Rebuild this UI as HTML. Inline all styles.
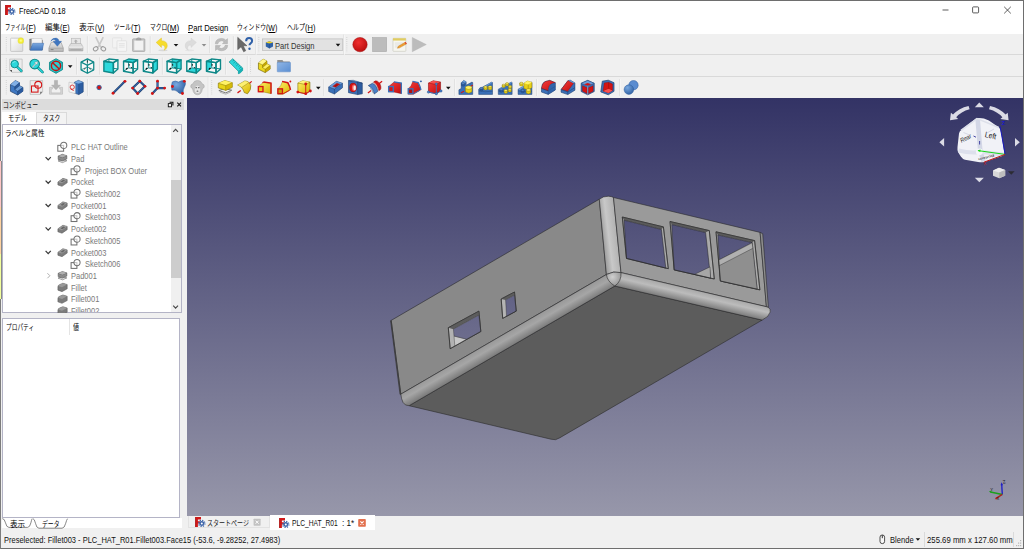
<!DOCTYPE html>
<html lang="ja"><head><meta charset="utf-8"><title>FreeCAD 0.18</title><style>
html,body{margin:0;padding:0;}
body{width:1024px;height:549px;overflow:hidden;position:relative;background:#f0f0f0;font-family:"Liberation Sans", "Noto Sans CJK JP", sans-serif;}
div,span.t,svg{position:absolute;}
span.t{white-space:nowrap;line-height:12px;height:12px;transform-origin:0 50%;}
u{text-decoration-thickness:0.6px;text-underline-offset:1px;}
</style></head>
<body>
<div style="left:0px;top:0px;width:1024px;height:1px;background:#6e6e6e;"></div><div style="left:1023px;top:0px;width:1px;height:549px;background:#6e6e6e;"></div><div style="left:0px;top:548px;width:1024px;height:1px;background:#6e6e6e;"></div><div style="left:0px;top:0px;width:1px;height:549px;background:#7c7c7c;"></div><div style="left:1px;top:1px;width:1022px;height:33.6px;background:#fff;"></div><span id="t0" class="t" style="left:18.8px;top:5.20px;font-size:8.6px;color:#000;transform:scaleX(0.8482);">FreeCAD 0.18</span><svg style="left:5.2px;top:5px;width:10.6px;height:10.0px" viewBox="0 0 10.6 10"><path d="M0.3 0.100h5.700v2.500h-3.100v1.700h2v2.100h-2v3.500h-2.600z" fill="#cf1818"/><path d="M0.300 0.100h.7v9.800h-.7z" fill="#a81212"/><circle cx="6.800" cy="6.400" r="2.500" fill="#3c64a8"/><circle cx="6.800" cy="6.400" r="3.100" fill="none" stroke="#3c64a8" stroke-width="1.300" stroke-dasharray="1.200 1.230"/><circle cx="6.800" cy="6.400" r="1" fill="#fff"/></svg><svg style="left:930px;top:0;width:93px;height:20px" viewBox="0 0 93 20"><path d="M12.5 10h6" stroke="#333" stroke-width="0.8" fill="none"/><rect x="42.6" y="6.9" width="6" height="6" rx="0.8" stroke="#333" stroke-width="0.8" fill="none"/><path d="M74.2 6.8l6.6 6.6M80.8 6.8l-6.6 6.6" stroke="#333" stroke-width="0.8" fill="none"/></svg><span id="t1" class="t" style="left:5px;top:21.90px;font-size:8px;color:#000;transform:scaleX(0.6500);">ファイル</span><span id="t2" class="t" style="left:26.1px;top:22.00px;font-size:8.6px;color:#000;transform:scaleX(0.9000);">(<u>F</u>)</span><span id="t3" class="t" style="left:45.3px;top:21.90px;font-size:8px;color:#000;transform:scaleX(0.9313);">編集</span><span id="t4" class="t" style="left:60.4px;top:22.00px;font-size:8.6px;color:#000;transform:scaleX(0.8359);">(<u>E</u>)</span><span id="t5" class="t" style="left:79.4px;top:21.90px;font-size:8px;color:#000;transform:scaleX(0.9750);">表示</span><span id="t6" class="t" style="left:95.2px;top:22.00px;font-size:8.6px;color:#000;transform:scaleX(0.8272);">(<u>V</u>)</span><span id="t7" class="t" style="left:113.8px;top:21.90px;font-size:8px;color:#000;transform:scaleX(0.6958);">ツール</span><span id="t8" class="t" style="left:130.8px;top:22.00px;font-size:8.6px;color:#000;transform:scaleX(0.8636);">(<u>T</u>)</span><span id="t9" class="t" style="left:149.6px;top:21.90px;font-size:8px;color:#000;transform:scaleX(0.7208);">マクロ</span><span id="t10" class="t" style="left:167.1px;top:22.00px;font-size:8.6px;color:#000;transform:scaleX(0.9441);">(<u>M</u>)</span><span id="t11" class="t" style="left:236.8px;top:21.90px;font-size:8px;color:#000;transform:scaleX(0.7250);">ウィンドウ</span><span id="t12" class="t" style="left:266px;top:22.00px;font-size:8.6px;color:#000;transform:scaleX(0.8144);">(<u>W</u>)</span><span id="t13" class="t" style="left:286.6px;top:21.90px;font-size:8px;color:#000;transform:scaleX(0.7542);">ヘルプ</span><span id="t14" class="t" style="left:304.9px;top:22.00px;font-size:8.6px;color:#000;transform:scaleX(0.8689);">(<u>H</u>)</span><span id="t15" class="t" style="left:187.9px;top:22.00px;font-size:8.6px;color:#000;transform:scaleX(0.8952);"><u>P</u>art Design</span><div style="left:1px;top:34px;width:1022px;height:64px;background:#f0f0f0;"></div><div style="left:1px;top:54.4px;width:1022px;height:1px;background:#d9d9d9;"></div><div style="left:1px;top:76px;width:1022px;height:1px;background:#d9d9d9;"></div><svg style="left:0;top:34px;width:1024px;height:64px" viewBox="0 34 1024 64"><defs><linearGradient id="gPage" x1="0" y1="0" x2="1" y2="1"><stop offset="0" stop-color="#fdfdfd"/><stop offset="1" stop-color="#dcdcdc"/></linearGradient><linearGradient id="gBlue" x1="0" y1="0" x2="0" y2="1"><stop offset="0" stop-color="#7aa7de"/><stop offset="1" stop-color="#3f74bd"/></linearGradient><linearGradient id="gFold" x1="0" y1="0" x2="1" y2="1"><stop offset="0" stop-color="#90b6e6"/><stop offset="1" stop-color="#5a8ed2"/></linearGradient><linearGradient id="gGrey" x1="0" y1="0" x2="0" y2="1"><stop offset="0" stop-color="#e8e8e8"/><stop offset="1" stop-color="#b4b4b4"/></linearGradient><radialGradient id="gYel" cx="0.5" cy="0.5" r="0.5"><stop offset="0" stop-color="#ffffa0"/><stop offset="0.6" stop-color="#f4ee30"/><stop offset="1" stop-color="#e8e020" stop-opacity="0.7"/></radialGradient><radialGradient id="gRed" cx="0.4" cy="0.35" r="0.7"><stop offset="0" stop-color="#f03030"/><stop offset="1" stop-color="#b80c0c"/></radialGradient><linearGradient id="gYb" x1="0" y1="0" x2="1" y2="1"><stop offset="0" stop-color="#fff26a"/><stop offset="1" stop-color="#d8b400"/></linearGradient><linearGradient id="gBb" x1="0" y1="0" x2="1" y2="1"><stop offset="0" stop-color="#5e92d4"/><stop offset="1" stop-color="#2a5a9c"/></linearGradient><linearGradient id="gRb" x1="0" y1="0" x2="1" y2="1"><stop offset="0" stop-color="#f43c3c"/><stop offset="1" stop-color="#c00c0c"/></linearGradient><radialGradient id="gSph" cx="0.35" cy="0.3" r="0.8"><stop offset="0" stop-color="#78a8e0"/><stop offset="1" stop-color="#2c5c9e"/></radialGradient></defs><path d="M6.3 37.1v15" stroke="#b8b8b8" stroke-width=".7" stroke-dasharray=".7 1.4"/><g transform="translate(9.12,36.92) scale(0.96)"><rect x="1.6" y="1.3" width="12.6" height="13.8" rx=".6" fill="url(#gPage)" stroke="#b9b9b9" stroke-width=".7"/><circle cx="12.2" cy="3.9" r="3.3" fill="url(#gYel)"/></g><g transform="translate(28.72,36.92) scale(0.96)"><path d="M1 2.2h4.6l1 1.2h7.8v10.2h-13.4z" fill="#8a8a8a" stroke="#6e6e6e" stroke-width=".5"/><rect x="3.2" y="1.6" width="10.6" height="8" fill="#f4f4f4" stroke="#bdbdbd" stroke-width=".5"/><path d="M4.2 6.6h11.4l-1.6 7.4h-12.4z" fill="url(#gBlue)" stroke="#3c6cae" stroke-width=".5"/></g><g transform="translate(48.32,36.92) scale(0.96)"><path d="M3 5.6h10.2l2.4 6v3.6h-15v-3.6z" fill="url(#gGrey)" stroke="#8e8e8e" stroke-width=".6"/><path d="M.8 11.8h14.6" stroke="#9a9a9a" stroke-width=".6"/><rect x="2.4" y="12.8" width="3" height=".9" fill="#777"/><path d="M2.6 4.4q1.6 -3.6 5.6 -3.2q2.6 .4 3 3.4h2.6l-4.4 5.2l-4.4 -5.2h2.7q-.3 -1.8 -2 -1.8q-1.8 0 -3.1 1.6z" fill="#3e76c0" stroke="#2f62a6" stroke-width=".4"/></g><g transform="translate(68.12,36.92) scale(0.96)"><rect x="3.4" y="1.4" width="9.4" height="6" fill="#e6e6e6" stroke="#b4b4b4" stroke-width=".6"/><path d="M8 2.6l2.2 2.2h-1.4v2h-1.6v-2h-1.4z" fill="#b0b0b0"/><path d="M2.6 7h11l1.8 3.4v4.2h-14.6v-4.2z" fill="url(#gGrey)" stroke="#a8a8a8" stroke-width=".6"/><path d="M1 10.6h14.2" stroke="#fff" stroke-width=".9"/><path d="M2.4 13.2h11.4" stroke="#a0a0a0" stroke-width=".7"/></g><path d="M87.4 36.1v17" stroke="#d2d2d2" stroke-width=".7"/><path d="M88.10000000000001 36.1v17" stroke="#fcfcfc" stroke-width=".6"/><g transform="translate(91.82,36.92) scale(0.96)"><path d="M4.4 .8l4.6 9.4M11.6 .8l-4.6 9.4" stroke="#c9c9c9" stroke-width="1.7" stroke-linecap="round"/><ellipse cx="4" cy="12.4" rx="2.5" ry="2" fill="none" stroke="#9c9c9c" stroke-width="1.1" transform="rotate(-30 4 12.4)"/><ellipse cx="12" cy="12.4" rx="2.5" ry="2" fill="none" stroke="#9c9c9c" stroke-width="1.1" transform="rotate(30 12 12.4)"/></g><g transform="translate(111.82,36.92) scale(0.96)"><rect x=".8" y="1" width="9.4" height="10.4" rx=".5" fill="#f3f3f3" stroke="#dcdcdc" stroke-width=".6"/><rect x="5.4" y="4" width="10" height="11" rx=".5" fill="#f5f5f5" stroke="#d6d6d6" stroke-width=".6"/><path d="M7.4 7h6M7.4 8.8h6M7.4 10.6h6" stroke="#dedede" stroke-width=".8"/></g><g transform="translate(131.02,36.92) scale(0.96)"><rect x="1.6" y="2" width="12.8" height="13.2" rx=".8" fill="#c4c4c4" stroke="#a2a2a2" stroke-width=".7"/><rect x="3.2" y="3.8" width="9.6" height="10" fill="#f2f2f2" stroke="#d0d0d0" stroke-width=".4"/><path d="M5.4 3.2q0 -2.4 2.6 -2.4t2.6 2.4z" fill="#a8a8a8" stroke="#8e8e8e" stroke-width=".4"/></g><path d="M150.3 36.1v17" stroke="#d2d2d2" stroke-width=".7"/><path d="M151.0 36.1v17" stroke="#fcfcfc" stroke-width=".6"/><g transform="translate(154.70,37.30) scale(0.9119999999999999)"><ellipse cx="9" cy="14.3" rx="5" ry="1" fill="#d8d8d8"/><path d="M1.6 5.6l5.8 -4.8v2.9q6.400 .2 6.400 5.800q0 3 -3.4 4.600q1.600 -2.400 .4 -4.200q-1.200 -1.400 -3.400 -1.400v2.600z" fill="#f6dc2c" stroke="#e0c020" stroke-width=".5"/></g><path d="M173.7 43.9h4.600l-2.300 2.600z" fill="#111"/><g transform="translate(183.20,37.30) scale(0.9119999999999999)"><ellipse cx="7" cy="14.3" rx="5" ry="1" fill="#e4e4e4"/><path d="M14.4 5.6l-5.8 -4.8v2.9q-6.400 .2 -6.400 5.800q0 3 3.4 4.600q-1.600 -2.400 -.4 -4.200q1.200 -1.400 3.400 -1.400v2.600z" fill="#dcdcdc" stroke="#d0d0d0" stroke-width=".5"/></g><path d="M201.7 43.9h4.600l-2.300 2.600z" fill="#8c8c8c"/><path d="M209.6 36.1v17" stroke="#d2d2d2" stroke-width=".7"/><path d="M210.29999999999998 36.1v17" stroke="#fcfcfc" stroke-width=".6"/><g transform="translate(213.82,36.92) scale(0.96)"><path d="M1.6 7.200q.2 -5.400 6.400 -5.600q3 0 4.600 1.800l1.600 -1.600v5.200h-5.200l1.800 -1.800q-1.200 -1.200 -2.800 -1.200q-3.400 .2 -3.800 3.200z" fill="#bdbdbd" stroke="#a4a4a4" stroke-width=".5"/><path d="M14.400 8.800q-.2 5.400 -6.400 5.600q-3 0 -4.600 -1.800l-1.600 1.600v-5.200h5.200l-1.800 1.800q1.200 1.200 2.800 1.200q3.400 -.2 3.800 -3.200z" fill="#bdbdbd" stroke="#a4a4a4" stroke-width=".5"/></g><path d="M233.4 36.1v17" stroke="#d2d2d2" stroke-width=".7"/><path d="M234.1 36.1v17" stroke="#fcfcfc" stroke-width=".6"/><g transform="translate(237.12,36.92) scale(0.96)"><path d="M.6 .4l9.600 8.800h-3.800l2.600 5.200l-2.200 1.100l-2.600 -5.200l-3.600 3z" fill="#6a6a6a" stroke="#4c4c4c" stroke-width=".5"/><path d="M9.400 4.400q0 -3.200 3.100 -3.200t3.100 2.900q0 1.700 -1.500 2.500q-1.200 .7 -1.200 2.200" fill="none" stroke="#2f60a8" stroke-width="2.100"/><circle cx="12.900" cy="12.300" r="1.250" fill="#2f60a8"/></g><path d="M255.5 34.5v20.5" stroke="#d8d8d8" stroke-width=".7"/><path d="M256.2 34.5v20.5" stroke="#fdfdfd" stroke-width=".6"/><path d="M258.8 37.1v15" stroke="#b8b8b8" stroke-width=".7" stroke-dasharray=".7 1.4"/><rect x="262.3" y="38.9" width="80.500" height="11.500" fill="#e2e2e2" stroke="#b4b4b4" stroke-width=".6"/><g transform="translate(265.2,40.6) scale(.6)"><path d="M1 3l6 -2l6 2v7l-6 3l-6 -3z" fill="#2f62a8"/><path d="M1 3l6 2l6 -2l-6 -2z" fill="#f0d020"/><path d="M7 5v8" stroke="#1c3c70" stroke-width=".6"/></g><path d="M335.7 43.800000000000004h4.600l-2.300 2.600z" fill="#111"/><path d="M343.8 34.5v20.5" stroke="#d8d8d8" stroke-width=".7"/><path d="M344.5 34.5v20.5" stroke="#fdfdfd" stroke-width=".6"/><path d="M346.8 37.1v15" stroke="#b8b8b8" stroke-width=".7" stroke-dasharray=".7 1.4"/><g transform="translate(352.32,36.92) scale(0.96)"><circle cx="8" cy="8" r="7.5" fill="url(#gRed)" stroke="#a00808" stroke-width=".5"/></g><g transform="translate(371.92,36.92) scale(0.96)"><rect x=".6" y=".6" width="14.8" height="14.8" fill="#bcbcbc" stroke="#a8a8a8" stroke-width=".6"/></g><g transform="translate(392.02,36.92) scale(0.96)"><rect x="1" y="1.4" width="13.4" height="13.6" rx=".6" fill="#f6f6f0" stroke="#c4c4b8" stroke-width=".6"/><rect x="1" y="1.4" width="13.4" height="2.4" fill="#e0cc60"/><path d="M3 6.400h9M3 8.400h6M3 10.400h4" stroke="#d0d0d0" stroke-width=".6"/><path d="M5.600 11.800l1 -2.200l7.400 -4.200l1.200 1.800l-7.400 4.200z" fill="#f0a030" stroke="#b06818" stroke-width=".4"/><path d="M13.200 5.800l.8 -.4l1.200 1.800l-.8 .5z" fill="#e03030"/></g><g transform="translate(411.52,36.92) scale(0.96)"><path d="M.8 .6l14.600 7.400l-14.600 7.400z" fill="#bcbcbc" stroke="#b0b0b0" stroke-width=".4"/></g><path d="M6.3 58.5v15" stroke="#b8b8b8" stroke-width=".7" stroke-dasharray=".7 1.4"/><g transform="translate(8.92,58.32) scale(0.96)"><path d="M.8 .8h13v13.8h-10.600l-2.400 -2.400z" fill="#ececec" stroke="#b0b0b0" stroke-width=".6"/><path d="M.8 12.200h2.400v2.400z" fill="#555"/><path d="M8.600 9l4.400 4.200" stroke="#0e8888" stroke-width="2.6" stroke-linecap="round"/><path d="M8.600 9l4.400 4.200" stroke="#2cd8dc" stroke-width="1.3" stroke-linecap="round"/><circle cx="6" cy="6" r="3.900" fill="#2cd8dc" stroke="#0e8888" stroke-width="1"/><path d="M3.600 5.200q1 -2 3.400 -1.800" stroke="#9af0f0" stroke-width=".8" fill="none"/></g><g transform="translate(28.72,58.32) scale(0.96)"><path d="M9.400 9.600l5 4.800" stroke="#0e8888" stroke-width="2.8" stroke-linecap="round"/><path d="M9.400 9.600l5 4.800" stroke="#2cd8dc" stroke-width="1.4" stroke-linecap="round"/><circle cx="6.200" cy="6" r="5" fill="#2cd8dc" stroke="#0e8888" stroke-width="1.1"/><path d="M3.400 9l3.600 -3.800l-1.200 -1l3.800 -1l-.8 3.800l-1 -1.100l-3.600 3.800z" fill="#e8e8e8" stroke="#6a8a8a" stroke-width=".4"/></g><g transform="translate(48.32,58.32) scale(0.96)"><path d="M8 .4l6.800 3.800v7.600l-6.800 3.800l-6.800 -3.800v-7.600z" fill="#28c4c8" stroke="#0e8888" stroke-width=".9"/><path d="M1.200 4.200l6.800 3.800l6.800 -3.800M8 8v7.600" stroke="#0e8888" stroke-width=".6" fill="none"/><circle cx="8" cy="7.800" r="4.800" fill="#30d8dc" fill-opacity=".6" stroke="#c41414" stroke-width="1.500"/><path d="M4.600 4.600l6.800 6.600" stroke="#c41414" stroke-width="1.500"/></g><path d="M67.9 65.3h4.600l-2.300 2.600z" fill="#111"/><path d="M76.5 57.5v17" stroke="#d2d2d2" stroke-width=".7"/><path d="M77.2 57.5v17" stroke="#fcfcfc" stroke-width=".6"/><g transform="translate(79.72,58.32) scale(0.96)"><path d="M8 .6l6.600 3.400v8l-6.600 3.500l-6.600 -3.500v-8z" fill="#f8f8f8" stroke="#0e8888" stroke-width="1.300" stroke-linejoin="round"/><path d="M1.400 4l6.600 3.200l6.600 -3.200M8 7.200v8.300" stroke="#0e8888" stroke-width="1.300" fill="none"/><path d="M8 .6v8.400l-6.600 3M8 9l6.600 3" stroke="#0e8888" stroke-width=".8" fill="none"/><path d="M8 2v2.400M4.400 11.400l1.600 -.8M11.600 11.400l-1.600 -.8" stroke="#1a1a1a" stroke-width=".8"/></g><path d="M99.5 57.5v17" stroke="#d2d2d2" stroke-width=".7"/><path d="M100.2 57.5v17" stroke="#fcfcfc" stroke-width=".6"/><g transform="translate(103.12,58.32) scale(0.96)"><polygon points="0.8,3.1 6,0.7 15.4,1.7 15.4,11 10.7,15.3 0.8,13.4" fill="#f8f8f8"/><path d="M6 10L6 0.7M6 10L15.4 11M6 10L0.8 13.4" stroke="#0e8888" stroke-width="1" fill="none"/><path d="M6.600 8.800l-2.600 2.200M6.600 8.800v-2.400M6.600 8.800l2.800 1.200" stroke="#8cc8c8" stroke-width=".5" fill="none"/><path d="M3.400 11.400l1.500 -1.300" stroke="#111" stroke-width="1.300"/><path d="M6.600 6v1.700M8.500 9.500l1.300 .6" stroke="#111" stroke-width="1"/><polygon points="0.8,3.1 10.7,4.5 10.7,15.3 0.8,13.4" fill="#2cd8dc"/><polygon points="0.8,3.1 10.7,4.5 10.7,15.3 0.8,13.4" fill="none" stroke="#0e8888" stroke-width="1.500" stroke-linejoin="round"/><polygon points="0.8,3.1 6,0.7 15.4,1.7 10.7,4.5" fill="none" stroke="#0e8888" stroke-width="1.400" stroke-linejoin="round"/><polygon points="10.7,4.5 15.4,1.7 15.4,11 10.7,15.3" fill="none" stroke="#0e8888" stroke-width="1.400" stroke-linejoin="round"/></g><g transform="translate(122.82,58.32) scale(0.96)"><polygon points="0.8,3.1 6,0.7 15.4,1.7 15.4,11 10.7,15.3 0.8,13.4" fill="#f8f8f8"/><path d="M6 10L6 0.7M6 10L15.4 11M6 10L0.8 13.4" stroke="#0e8888" stroke-width="1" fill="none"/><path d="M6.600 8.800l-2.600 2.200M6.600 8.800v-2.400M6.600 8.800l2.800 1.200" stroke="#8cc8c8" stroke-width=".5" fill="none"/><path d="M3.400 11.400l1.500 -1.300" stroke="#111" stroke-width="1.300"/><path d="M6.600 6v1.700M8.500 9.500l1.300 .6" stroke="#111" stroke-width="1"/><polygon points="0.8,3.1 6,0.7 15.4,1.7 10.7,4.5" fill="#2cd8dc"/><polygon points="0.8,3.1 10.7,4.5 10.7,15.3 0.8,13.4" fill="none" stroke="#0e8888" stroke-width="1.500" stroke-linejoin="round"/><polygon points="0.8,3.1 6,0.7 15.4,1.7 10.7,4.5" fill="none" stroke="#0e8888" stroke-width="1.400" stroke-linejoin="round"/><polygon points="10.7,4.5 15.4,1.7 15.4,11 10.7,15.3" fill="none" stroke="#0e8888" stroke-width="1.400" stroke-linejoin="round"/></g><g transform="translate(142.62,58.32) scale(0.96)"><polygon points="0.8,3.1 6,0.7 15.4,1.7 15.4,11 10.7,15.3 0.8,13.4" fill="#f8f8f8"/><path d="M6 10L6 0.7M6 10L15.4 11M6 10L0.8 13.4" stroke="#0e8888" stroke-width="1" fill="none"/><path d="M6.600 8.800l-2.600 2.200M6.600 8.800v-2.400M6.600 8.800l2.800 1.200" stroke="#8cc8c8" stroke-width=".5" fill="none"/><path d="M3.400 11.400l1.500 -1.300" stroke="#111" stroke-width="1.300"/><path d="M6.600 6v1.700M8.500 9.500l1.300 .6" stroke="#111" stroke-width="1"/><polygon points="10.7,4.5 15.4,1.7 15.4,11 10.7,15.3" fill="#2cd8dc"/><polygon points="0.8,3.1 10.7,4.5 10.7,15.3 0.8,13.4" fill="none" stroke="#0e8888" stroke-width="1.500" stroke-linejoin="round"/><polygon points="0.8,3.1 6,0.7 15.4,1.7 10.7,4.5" fill="none" stroke="#0e8888" stroke-width="1.400" stroke-linejoin="round"/><polygon points="10.7,4.5 15.4,1.7 15.4,11 10.7,15.3" fill="none" stroke="#0e8888" stroke-width="1.400" stroke-linejoin="round"/></g><path d="M162.4 57.5v17" stroke="#d2d2d2" stroke-width=".7"/><path d="M163.1 57.5v17" stroke="#fcfcfc" stroke-width=".6"/><g transform="translate(166.32,58.32) scale(0.96)"><polygon points="0.8,3.1 6,0.7 15.4,1.7 15.4,11 10.7,15.3 0.8,13.4" fill="#f8f8f8"/><polygon points="6,0.7 15.4,1.7 15.4,11 6,10" fill="#2cd8dc"/><path d="M6 10L6 0.7M6 10L15.4 11M6 10L0.8 13.4" stroke="#0e8888" stroke-width="1" fill="none"/><path d="M6.600 8.800l-2.600 2.200M6.600 8.800v-2.400M6.600 8.800l2.800 1.200" stroke="#8cc8c8" stroke-width=".5" fill="none"/><path d="M3.400 11.400l1.500 -1.300" stroke="#111" stroke-width="1.300"/><path d="M6.600 6v1.700M8.500 9.500l1.300 .6" stroke="#111" stroke-width="1"/><polygon points="0.8,3.1 10.7,4.5 10.7,15.3 0.8,13.4" fill="none" stroke="#0e8888" stroke-width="1.500" stroke-linejoin="round"/><polygon points="0.8,3.1 6,0.7 15.4,1.7 10.7,4.5" fill="none" stroke="#0e8888" stroke-width="1.400" stroke-linejoin="round"/><polygon points="10.7,4.5 15.4,1.7 15.4,11 10.7,15.3" fill="none" stroke="#0e8888" stroke-width="1.400" stroke-linejoin="round"/></g><g transform="translate(186.02,58.32) scale(0.96)"><polygon points="0.8,3.1 6,0.7 15.4,1.7 15.4,11 10.7,15.3 0.8,13.4" fill="#f8f8f8"/><polygon points="0.8,13.4 10.7,15.3 15.4,11 6,10" fill="#2cd8dc"/><path d="M6 10L6 0.7M6 10L15.4 11M6 10L0.8 13.4" stroke="#0e8888" stroke-width="1" fill="none"/><path d="M6.600 8.800l-2.600 2.200M6.600 8.800v-2.400M6.600 8.800l2.800 1.200" stroke="#8cc8c8" stroke-width=".5" fill="none"/><path d="M3.400 11.400l1.500 -1.300" stroke="#111" stroke-width="1.300"/><path d="M6.600 6v1.700M8.500 9.500l1.300 .6" stroke="#111" stroke-width="1"/><polygon points="0.8,3.1 10.7,4.5 10.7,15.3 0.8,13.4" fill="none" stroke="#0e8888" stroke-width="1.500" stroke-linejoin="round"/><polygon points="0.8,3.1 6,0.7 15.4,1.7 10.7,4.5" fill="none" stroke="#0e8888" stroke-width="1.400" stroke-linejoin="round"/><polygon points="10.7,4.5 15.4,1.7 15.4,11 10.7,15.3" fill="none" stroke="#0e8888" stroke-width="1.400" stroke-linejoin="round"/></g><g transform="translate(205.72,58.32) scale(0.96)"><polygon points="0.8,3.1 6,0.7 15.4,1.7 15.4,11 10.7,15.3 0.8,13.4" fill="#f8f8f8"/><polygon points="0.8,3.1 6,0.7 6,10 0.8,13.4" fill="#2cd8dc"/><path d="M6 10L6 0.7M6 10L15.4 11M6 10L0.8 13.4" stroke="#0e8888" stroke-width="1" fill="none"/><path d="M6.600 8.800l-2.600 2.200M6.600 8.800v-2.400M6.600 8.800l2.800 1.200" stroke="#8cc8c8" stroke-width=".5" fill="none"/><path d="M3.400 11.400l1.500 -1.300" stroke="#111" stroke-width="1.300"/><path d="M6.600 6v1.700M8.500 9.500l1.300 .6" stroke="#111" stroke-width="1"/><polygon points="0.8,3.1 10.7,4.5 10.7,15.3 0.8,13.4" fill="none" stroke="#0e8888" stroke-width="1.500" stroke-linejoin="round"/><polygon points="0.8,3.1 6,0.7 15.4,1.7 10.7,4.5" fill="none" stroke="#0e8888" stroke-width="1.400" stroke-linejoin="round"/><polygon points="10.7,4.5 15.4,1.7 15.4,11 10.7,15.3" fill="none" stroke="#0e8888" stroke-width="1.400" stroke-linejoin="round"/></g><path d="M225.5 57.5v17" stroke="#d2d2d2" stroke-width=".7"/><path d="M226.2 57.5v17" stroke="#fcfcfc" stroke-width=".6"/><g transform="translate(228.32,58.32) scale(0.96)"><path d="M.8 3.800l3.800 -3.400l10.300 9.700v2.700q-2.400 2.800 -4.400 3.200v-2.500z" fill="#2cd8dc" stroke="#0e8888" stroke-width=".7" stroke-linejoin="round"/><path d="M10.500 13.500l4.400 -3.400" stroke="#0e8888" stroke-width=".6"/><path d="M10.500 13.500l4.400 -3.400v2.700q-2.400 2.800 -4.400 3.200z" fill="#18b0b4"/><path d="M6 1.800l-1.500 1.300M7.500 3.200l-2.200 1.900M9 4.600l-1.500 1.300M10.500 6l-2.200 1.900M12 7.400l-1.500 1.300M13.500 8.800l-2.200 1.900" stroke="#0e8888" stroke-width=".7"/></g><path d="M247.4 56v20" stroke="#d8d8d8" stroke-width=".7"/><path d="M248.1 56v20" stroke="#fdfdfd" stroke-width=".6"/><path d="M250.5 58.5v15" stroke="#b8b8b8" stroke-width=".7" stroke-dasharray=".7 1.4"/><g transform="translate(257.00,58.40) scale(0.9)"><polygon points="1.6,5.1 6.7,.8 11,3 11,6.1 14.6,7.9 14.6,11.9 9.1,15.8 1.6,12" fill="#ecd820" stroke="#6e6000" stroke-width=".7" stroke-linejoin="round"/><polygon points="1.6,5.1 6.7,.8 11,3 6.1,7.2" fill="#fff68a"/><polygon points="6.1,7.2 11,3 11,6.1 6.1,10.2" fill="#c8a800"/><polygon points="6.1,10.2 11,6.1 14.6,7.9 9.1,12" fill="#fff060"/><polygon points="9.1,12 14.6,7.900 14.6,11.9 9.1,15.8" fill="#c8a800"/><path d="M1.600 5.100l4.500 2.100l4.900 -4.200M6.100 7.200v3l3 1.800l5.500 -4.100M9.100 12v3.800M6.100 10.200l4.900 -4.100" fill="none" stroke="#6e6000" stroke-width=".45"/></g><g transform="translate(276.34,58.44) scale(0.92)"><path d="M1 1.600h5.600l1.200 1.600h6.800v2h-13.600z" fill="#909090"/><rect x="1" y="4.200" width="14.400" height="10.400" rx=".6" fill="url(#gFold)" stroke="#5c88c4" stroke-width=".5"/></g><path d="M6.3 80.0v15" stroke="#b8b8b8" stroke-width=".7" stroke-dasharray=".7 1.4"/><g transform="translate(8.92,79.82) scale(0.96)"><polygon points="1.6,5.1 6.7,.8 11,3 11,6.1 14.6,7.9 14.6,11.9 9.1,15.8 1.6,12" fill="#3f78c2" stroke="#16345e" stroke-width=".7" stroke-linejoin="round"/><polygon points="1.6,5.1 6.7,.8 11,3 6.1,7.2" fill="#82b0e6"/><polygon points="6.1,7.2 11,3 11,6.1 6.1,10.2" fill="#2a5a9e"/><polygon points="6.1,10.2 11,6.1 14.6,7.9 9.1,12" fill="#6a9cd8"/><polygon points="9.1,12 14.6,7.900 14.6,11.9 9.1,15.8" fill="#2a5a9e"/><path d="M1.600 5.100l4.500 2.100l4.900 -4.200M6.100 7.200v3l3 1.800l5.500 -4.100M9.100 12v3.800M6.100 10.200l4.900 -4.100" fill="none" stroke="#16345e" stroke-width=".45"/></g><g transform="translate(28.62,79.82) scale(0.96)"><path d="M1.600 .8h13v11.600l-2.600 2.800h-10.400z" fill="#ececec" stroke="#a8a8a8" stroke-width=".6"/><path d="M14.600 12.400l-2.600 2.800v-2.800z" fill="#777"/><rect x="3" y="6.400" width="6.800" height="6.400" fill="none" stroke="#d41414" stroke-width="1.100"/><circle cx="10" cy="5.200" r="3.600" fill="none" stroke="#d41414" stroke-width="1.100"/></g><g transform="translate(48.32,79.82) scale(0.96)"><path d="M6.400 .6h3.200v5h3l-4.600 4.800l-4.600 -4.800h3z" fill="#b4b4b4" stroke="#9c9c9c" stroke-width=".4"/><path d="M1.200 7.800h3.200v1.600h-1.400v4.200h10v-4.200h-1.400v-1.600h3.200v7.200h-13.600z" fill="#d8d8d8" stroke="#ababab" stroke-width=".5"/></g><g transform="translate(68.22,79.82) scale(0.96)"><path d="M6.400 2.600l4.200 -2l5 2v10l-4.600 2.800l-4.600 -1.600z" fill="#3a70b8" stroke="#1c3c6c" stroke-width=".6" stroke-linejoin="round"/><path d="M6.400 2.600l4.600 1.600l4.600 -1.600l-5 -2z" fill="#78a8e0"/><path d="M11 4.200v11.200" stroke="#1c3c6c" stroke-width=".5"/><path d="M11 4.200l4.600 -1.600v10l-4.600 2.800z" fill="#1e4a8a" fill-opacity=".5"/><path d="M.8 2.400l6.600 1.600v10.400l-6.600 -1.800z" fill="#f4f4f4" stroke="#b0b0b0" stroke-width=".5"/><circle cx="4.200" cy="7.600" r="2.200" fill="none" stroke="#d41414" stroke-width=".8"/><path d="M2.400 9.600l3.400 1.600" stroke="#d41414" stroke-width=".8"/></g><path d="M87.8 79.0v17" stroke="#d2d2d2" stroke-width=".7"/><path d="M88.5 79.0v17" stroke="#fcfcfc" stroke-width=".6"/><g transform="translate(91.42,79.82) scale(0.96)"><circle cx="8" cy="8" r="2.300" fill="#d41414" stroke="#3465a4" stroke-width="1"/></g><g transform="translate(111.32,79.82) scale(0.96)"><path d="M1.800 14l12.400 -12.400" stroke="#1c3c6c" stroke-width="2.200"/><path d="M1.800 14l12.400 -12.400" stroke="#3a70b8" stroke-width="1"/><circle cx="1.8" cy="14" r="1.500" fill="#d41414"/><circle cx="14.2" cy="1.6" r="1.500" fill="#d41414"/></g><g transform="translate(131.12,79.82) scale(0.96)"><path d="M1.600 8.600l7.400 -7.200l5.400 5.400l-7.600 7.400z" fill="none" stroke="#1c3c6c" stroke-width="2.200"/><path d="M1.600 8.600l7.400 -7.200l5.400 5.400l-7.600 7.400z" fill="none" stroke="#3a70b8" stroke-width="1"/><circle cx="1.6" cy="8.6" r="1.500" fill="#d41414"/><circle cx="9" cy="1.4" r="1.500" fill="#d41414"/><circle cx="14.4" cy="6.8" r="1.500" fill="#d41414"/><circle cx="6.8" cy="14.2" r="1.500" fill="#d41414"/></g><g transform="translate(150.62,79.82) scale(0.96)"><path d="M7.200 1.400v7.200l-5.400 5.600M7.200 8.600h7.400" fill="none" stroke="#1c3c6c" stroke-width="2.200"/><path d="M7.200 1.400v7.200l-5.400 5.600M7.200 8.600h7.400" fill="none" stroke="#3a70b8" stroke-width="1"/><circle cx="7.2" cy="1.4" r="1.500" fill="#d41414"/><circle cx="7.2" cy="8.6" r="1.500" fill="#d41414"/><circle cx="1.8" cy="14.2" r="1.500" fill="#d41414"/><circle cx="14.6" cy="8.6" r="1.500" fill="#d41414"/></g><g transform="translate(170.72,79.82) scale(0.96)"><path d="M1.600 2.200q3.400 -2 6.400 .2q3 -2.200 6.600 -1.400q1.800 3.200 -.4 6.600q-1.400 2.200 -1.200 6.400q-4.200 1.400 -6.400 -2q-2 -1.600 -5.400 -1.200q-1.200 -4.600 .4 -8.600z" fill="url(#gSph)" stroke="#2a5a9c" stroke-width=".5"/><circle cx="14.2" cy="1.6" r="1.500" fill="#d41414"/><circle cx="1.8" cy="7" r="1.500" fill="#d41414"/><circle cx="12.2" cy="14.2" r="1.500" fill="#d41414"/></g><g transform="translate(189.82,79.82) scale(0.96)"><path d="M1 7.400q-.6 -2.600 2.200 -3.400q1.200 -3.400 4.800 -3.400t4.800 3.400q2.800 .8 2.200 3.400q-.4 1.400 -1.800 1.600q-.4 3.600 -2.200 5.400q-1.400 1.200 -3 1.200t-3 -1.200q-1.800 -1.800 -2.200 -5.400q-1.400 -.2 -1.800 -1.600z" fill="#c4c4c4" stroke="#a0a0a0" stroke-width=".5"/><ellipse cx="8" cy="10" rx="2.800" ry="3.800" fill="#e4e4e4"/><circle cx="6.600" cy="8.200" r=".7" fill="#444"/><circle cx="9.400" cy="8.200" r=".7" fill="#444"/><ellipse cx="8" cy="11.800" rx="1" ry=".6" fill="#666"/></g><path d="M208.2 77v20.5" stroke="#d8d8d8" stroke-width=".7"/><path d="M208.89999999999998 77v20.5" stroke="#fdfdfd" stroke-width=".6"/><path d="M211.7 80.0v15" stroke="#b8b8b8" stroke-width=".7" stroke-dasharray=".7 1.4"/><g transform="translate(217.52,79.82) scale(0.96)"><path d="M1.400 11.200l6 -2l7.400 1.600l-6.200 2.800z" fill="none" stroke="#6a6a6a" stroke-width=".9"/><path d="M2.400 12.800l6.200 2.200l5.400 -2.600" fill="none" stroke="#9a9a9a" stroke-width=".7"/><path d="M.8 3.600l6.800 -2.800l7.800 2.200v4.800l-6.800 3.200l-7.800 -2.600z" fill="#e8d418" stroke="#7a6a00" stroke-width=".6" stroke-linejoin="round"/><path d="M.8 3.600l7.800 2.400l6.800 -3l-7.800 -2.200z" fill="#fff264"/><path d="M.8 3.600l7.800 2.400l6.800 -3M8.600 6v5" fill="none" stroke="#7a6a00" stroke-width=".5"/><path d="M8.600 6l6.800 -3v4.800l-6.800 3.200z" fill="#c8a800" fill-opacity=".6"/></g><g transform="translate(236.92,79.82) scale(0.96)"><path d="M.6 13.600l3.400 -2.400M12.600 4l2.800 -2.400" stroke="#d41414" stroke-width="1.300"/><path d="M.8 5.400l7.400 -4.200q5 .2 6.200 4.800q.8 4.200 -3.400 8.600l-3.400 -1.400q-1.200 -5.400 -6.800 -7.800z" fill="url(#gYb)" stroke="#7a6a00" stroke-width=".6" stroke-linejoin="round"/><path d="M.8 5.400l7.400 -4.200q2.600 .2 4.200 1.800l-7.200 4.800q-1.800 -1.600 -4.400 -2.400z" fill="#fff47a" fill-opacity=".8"/><path d="M5.200 7.800l7.200 -4.800" stroke="#7a6a00" stroke-width=".4"/></g><g transform="translate(256.82,79.82) scale(0.96)"><path d="M1.600 7l5.600 -4.600l7.600 1.200v10.800l-8.200 -1.800l-5 -.4z" fill="url(#gYb)" stroke="#7a6a00" stroke-width=".4"/><path d="M7 2.200l7.800 1.200v11.200" fill="none" stroke="#d41414" stroke-width="1.500"/><path d="M7 2.200l-1 1" stroke="#d41414" stroke-width="1.300"/><rect x="1.600" y="7" width="4.800" height="5.400" fill="#e8c818" stroke="#d41414" stroke-width="1.400"/></g><g transform="translate(276.52,79.82) scale(0.96)"><path d="M1.400 9.200q3.400 -2.400 4.800 -7.400l5.400 1.400q2.200 4.200 2.800 7.400l-7.600 4.400h-5.400z" fill="url(#gYb)" stroke="#7a6a00" stroke-width=".4"/><path d="M5.800 1.600l6 1.400q2.200 4 2.800 7.400" fill="none" stroke="#d41414" stroke-width="1.500"/><circle cx="14.400" cy="1.800" r="1" fill="#d41414"/><rect x="1.400" y="9.400" width="4.800" height="5" fill="#c8a010" stroke="#d41414" stroke-width="1.400"/><path d="M7 14.400l6.600 -3.600" stroke="#d41414" stroke-width="1"/></g><g transform="translate(296.32,79.82) scale(0.96)"><path d="M1.600 3.400l5 -2.400l7.600 1.400v9.200l-4.400 3l-8.200 -1.800z" fill="url(#gYb)" stroke="#7a6a00" stroke-width=".6" stroke-linejoin="round"/><path d="M1.600 3.400l8.200 1.400l4.400 -2.400l-7.600 -1.400z" fill="#fff47a"/><path d="M1.600 3.400l8.200 1.400l4.400 -2.400" fill="none" stroke="#7a6a00" stroke-width=".5"/><path d="M9.800 4.800v9.800M1.600 12.800l8.200 1.800l4.800 -3" fill="none" stroke="#d41414" stroke-width="1"/><circle cx="9.8" cy="4.4" r="1.500" fill="#d41414"/><circle cx="9.8" cy="14.4" r="1.500" fill="#d41414"/><circle cx="1.6" cy="12.8" r="1.500" fill="#d41414"/><circle cx="14.6" cy="11.6" r="1.500" fill="#d41414"/></g><path d="M316.0 86.8h4.600l-2.300 2.600z" fill="#111"/><path d="M323.9 79.0v17" stroke="#d2d2d2" stroke-width=".7"/><path d="M324.59999999999997 79.0v17" stroke="#fcfcfc" stroke-width=".6"/><g transform="translate(327.92,79.82) scale(0.96)"><path d="M.8 7.400l8 -5.800l6.400 2v4.600l-8.400 6.600l-6 -2.600z" fill="#3a70b8" stroke="#1c3c6c" stroke-width=".6" stroke-linejoin="round"/><path d="M.8 7.400l8 -5.800l6.400 2l-8.400 6z" fill="#6a9cd8"/><path d="M.8 7.400l6 2.200l8.400 -6M6.800 9.600v5.200" fill="none" stroke="#1c3c6c" stroke-width=".5"/><path d="M5 6.800l4.400 -3.200l3 1l-4.400 3.200z" fill="#d41414" stroke="#8a0c0c" stroke-width=".4"/><path d="M6.400 6.600l2.800 -2l1.600 .6l-2.800 2z" fill="#a00c0c"/></g><g transform="translate(347.72,79.82) scale(0.96)"><path d="M.8 .8l9.600 1.600v13l-9.600 -2z" fill="#3a70b8" stroke="#1c3c6c" stroke-width=".6" stroke-linejoin="round"/><path d="M10.400 2.400l4.800 1v11.200l-4.800 .800z" fill="#2c5ca0" stroke="#1c3c6c" stroke-width=".6" stroke-linejoin="round"/><path d="M.8 .8l5 -.4l9.400 3l-4.800 -1z" fill="#6a9cd8" stroke="#1c3c6c" stroke-width=".4"/><ellipse cx="5.600" cy="8" rx="3.600" ry="4.600" fill="#d41414" stroke="#8a0c0c" stroke-width=".5"/><ellipse cx="6.600" cy="8.200" rx="2.200" ry="3.400" fill="#f46060"/><ellipse cx="7.200" cy="8.400" rx="1.300" ry="2.400" fill="#f0f0f0"/></g><g transform="translate(367.32,79.82) scale(0.96)"><path d="M.6 13.800l3.400 -2.600M12.400 3.800l3 -2.400" stroke="#d41414" stroke-width="1.300"/><path d="M1 6l4.400 -2.400q4.600 2 5.400 8.600l-3.600 2.600q-.6 -5.600 -6.200 -8.800z" fill="#4a80c8" stroke="#1c3c6c" stroke-width=".6" stroke-linejoin="round"/><path d="M6.400 2.400q2 -2 4 -1q4 2.600 3.800 7.400q-.4 2 -2.200 2.600q-1 -6 -5.600 -9z" fill="#d41414" stroke="#8a0c0c" stroke-width=".5"/><path d="M3 8.800q2.600 2.200 3.200 5" fill="none" stroke="#1c3c6c" stroke-width=".5"/></g><g transform="translate(387.12,79.82) scale(0.96)"><path d="M1.600 7l5.600 -4.600l7.600 1.200v10.800l-8.200 -1.800l-5 -.4z" fill="url(#gRb)" stroke="#8a0c0c" stroke-width=".4"/><path d="M7 2.200l7.800 1.200v11.200" fill="none" stroke="#3a70b8" stroke-width="1.400"/><rect x="1.600" y="7" width="4.800" height="5.400" fill="#d01818" stroke="#3a70b8" stroke-width="1.400"/></g><g transform="translate(406.92,79.82) scale(0.96)"><path d="M1.400 9.200q3.400 -2.400 4.800 -7.400l5.400 1.400q2.200 4.200 2.800 7.400l-7.600 4.400h-5.400z" fill="url(#gRb)" stroke="#8a0c0c" stroke-width=".4"/><path d="M5.800 1.600l6 1.400q2.200 4 2.800 7.400" fill="none" stroke="#3a70b8" stroke-width="1.400"/><circle cx="14.600" cy="1.600" r="1" fill="#2c5ca0"/><rect x="1.400" y="9.400" width="4.800" height="5" fill="#b01010" stroke="#3a70b8" stroke-width="1.400"/><path d="M7 14.400l6.600 -3.600" stroke="#3a70b8" stroke-width="1"/></g><g transform="translate(426.92,79.82) scale(0.96)"><path d="M1.600 3.400l5 -2.400l7.600 1.400v9.200l-4.400 3l-8.200 -1.800z" fill="url(#gRb)" stroke="#8a0c0c" stroke-width=".6" stroke-linejoin="round"/><path d="M1.600 3.400l8.200 1.400l4.400 -2.400l-7.600 -1.400z" fill="#f85050"/><path d="M1.600 3.400l8.200 1.400l4.400 -2.400" fill="none" stroke="#8a0c0c" stroke-width=".5"/><path d="M9.800 4.800v9.800M1.600 12.800l8.200 1.800l4.800 -3" fill="none" stroke="#3a70b8" stroke-width="1"/><circle cx="9.8" cy="4.4" r="1.300" fill="#4a80c8" stroke="#1c3c6c" stroke-width=".3"/><circle cx="9.8" cy="14.4" r="1.300" fill="#4a80c8" stroke="#1c3c6c" stroke-width=".3"/><circle cx="1.6" cy="12.8" r="1.300" fill="#4a80c8" stroke="#1c3c6c" stroke-width=".3"/><circle cx="14.6" cy="11.6" r="1.300" fill="#4a80c8" stroke="#1c3c6c" stroke-width=".3"/></g><path d="M446.0 86.8h4.600l-2.300 2.600z" fill="#111"/><path d="M454.7 79.0v17" stroke="#d2d2d2" stroke-width=".7"/><path d="M455.4 79.0v17" stroke="#fcfcfc" stroke-width=".6"/><g transform="translate(458.12,79.82) scale(0.96)"><path d="M.8 15.200v-4.800l2.400 -1.400v-6l2.600 -2.400l2.600 1.400v3.600l6 -3.200l.8 .4v12.400z" fill="#3a70b8" stroke="#1c3c6c" stroke-width=".5" stroke-linejoin="round"/><path d="M3.200 3l2.600 -2.400l2.600 1.400l-2.400 2.200z" fill="#6a9cd8"/><path d="M3 13.600l3 -1.800M13.400 6.800l1.800 -1.200" stroke="#d41414" stroke-width="1.200"/><path d="M3.5 3.7499999999999996v2.21q1.7 1.36 3.4 0v-2.21z" fill="#2c5ca0" stroke="#1c3c6c" stroke-width=".4"/><ellipse cx="5.2" cy="3.7499999999999996" rx="1.7" ry="0.935" fill="#5a8cd0" stroke="#1c3c6c" stroke-width=".4"/><path d="M7.6 8.100000000000001v4.42q3.4 2.72 6.8 0v-4.42z" fill="#e8d018" stroke="#7a6a00" stroke-width=".4"/><ellipse cx="11" cy="8.100000000000001" rx="3.4" ry="1.87" fill="#fff264" stroke="#7a6a00" stroke-width=".4"/></g><g transform="translate(477.92,79.82) scale(0.96)"><path d="M.8 15.200v-5.400l13.600 -7.400l.8 .4v12.400z" fill="#3a70b8" stroke="#1c3c6c" stroke-width=".5" stroke-linejoin="round"/><path d="M.8 11.600q7 1.600 14.400 .2" fill="none" stroke="#1c3c6c" stroke-width=".4"/><path d="M.8 9.800l13.600 -7.400l.8 .4l-13 7.800z" fill="#6a9cd8"/><path d="M1.9000000000000001 8.75v2.21q1.7 1.36 3.4 0v-2.21z" fill="#2c5ca0" stroke="#1c3c6c" stroke-width=".4"/><ellipse cx="3.6" cy="8.75" rx="1.7" ry="0.935" fill="#5a8cd0" stroke="#1c3c6c" stroke-width=".4"/><path d="M6.1 7.45v2.4699999999999998q1.9 1.52 3.8 0v-2.4699999999999998z" fill="#e8d018" stroke="#7a6a00" stroke-width=".4"/><ellipse cx="8" cy="7.45" rx="1.9" ry="1.045" fill="#fff264" stroke="#7a6a00" stroke-width=".4"/><path d="M10.7 7.249999999999999v2.4699999999999998q1.9 1.52 3.8 0v-2.4699999999999998z" fill="#e8d018" stroke="#7a6a00" stroke-width=".4"/><ellipse cx="12.6" cy="7.249999999999999" rx="1.9" ry="1.045" fill="#fff264" stroke="#7a6a00" stroke-width=".4"/></g><g transform="translate(497.52,79.82) scale(0.96)"><path d="M.8 15.200v-5.400l13.600 -7.400l.8 .4v12.400z" fill="#3a70b8" stroke="#1c3c6c" stroke-width=".5" stroke-linejoin="round"/><path d="M.8 11.600q7 1.600 14.400 .2" fill="none" stroke="#1c3c6c" stroke-width=".4"/><path d="M.8 9.800l13.600 -7.400l.8 .4l-13 7.800z" fill="#6a9cd8"/><path d="M4.800000000000001 5.4v2.08q1.6 1.2800000000000002 3.2 0v-2.08z" fill="#e8d018" stroke="#7a6a00" stroke-width=".4"/><ellipse cx="6.4" cy="5.4" rx="1.6" ry="0.8800000000000001" fill="#fff264" stroke="#7a6a00" stroke-width=".4"/><path d="M8.4 3.8v2.08q1.6 1.2800000000000002 3.2 0v-2.08z" fill="#e8d018" stroke="#7a6a00" stroke-width=".4"/><ellipse cx="10" cy="3.8" rx="1.6" ry="0.8800000000000001" fill="#fff264" stroke="#7a6a00" stroke-width=".4"/><path d="M11.4 6.6000000000000005v2.08q1.6 1.2800000000000002 3.2 0v-2.08z" fill="#e8d018" stroke="#7a6a00" stroke-width=".4"/><ellipse cx="13" cy="6.6000000000000005" rx="1.6" ry="0.8800000000000001" fill="#fff264" stroke="#7a6a00" stroke-width=".4"/><path d="M2.3 10.15v2.21q1.7 1.36 3.4 0v-2.21z" fill="#2c5ca0" stroke="#1c3c6c" stroke-width=".4"/><ellipse cx="4" cy="10.15" rx="1.7" ry="0.935" fill="#5a8cd0" stroke="#1c3c6c" stroke-width=".4"/><path d="M6.8 11.1v2.3400000000000003q1.8 1.4400000000000002 3.6 0v-2.3400000000000003z" fill="#e8d018" stroke="#7a6a00" stroke-width=".4"/><ellipse cx="8.6" cy="11.1" rx="1.8" ry="0.9900000000000001" fill="#fff264" stroke="#7a6a00" stroke-width=".4"/><path d="M11.200000000000001 10.0v2.08q1.6 1.2800000000000002 3.2 0v-2.08z" fill="#e8d018" stroke="#7a6a00" stroke-width=".4"/><ellipse cx="12.8" cy="10.0" rx="1.6" ry="0.8800000000000001" fill="#fff264" stroke="#7a6a00" stroke-width=".4"/></g><g transform="translate(517.32,79.82) scale(0.96)"><path d="M.8 15.200v-5.400l13.600 -7.400l.8 .4v12.400z" fill="#3a70b8" stroke="#1c3c6c" stroke-width=".5" stroke-linejoin="round"/><path d="M.8 11.600q7 1.600 14.400 .2" fill="none" stroke="#1c3c6c" stroke-width=".4"/><path d="M.8 9.800l13.600 -7.400l.8 .4l-13 7.800z" fill="#6a9cd8"/><path d="M2.4000000000000004 3.5000000000000004v2.3400000000000003q1.8 1.4400000000000002 3.6 0v-2.3400000000000003z" fill="#e8d018" stroke="#7a6a00" stroke-width=".4"/><ellipse cx="4.2" cy="3.5000000000000004" rx="1.8" ry="0.9900000000000001" fill="#fff264" stroke="#7a6a00" stroke-width=".4"/><path d="M6.800 3.600l3.600 -2.400l4.800 1.400v5.600l-3.800 2.400l-4.600 -1.600z" fill="#e8d018" stroke="#7a6a00" stroke-width=".4"/><path d="M6.800 3.600l4.600 1.400l3.800 -2.400l-4.800 -1.400z" fill="#fff264"/><path d="M11.400 5v5.600" stroke="#7a6a00" stroke-width=".4"/><path d="M3.9999999999999996 10.799999999999999v2.08q1.6 1.2800000000000002 3.2 0v-2.08z" fill="#2c5ca0" stroke="#1c3c6c" stroke-width=".4"/><ellipse cx="5.6" cy="10.799999999999999" rx="1.6" ry="0.8800000000000001" fill="#5a8cd0" stroke="#1c3c6c" stroke-width=".4"/><path d="M9.2 10.600000000000001v3.12q2.4 1.92 4.8 0v-3.12z" fill="#e8d018" stroke="#7a6a00" stroke-width=".4"/><ellipse cx="11.6" cy="10.600000000000001" rx="2.4" ry="1.32" fill="#fff264" stroke="#7a6a00" stroke-width=".4"/></g><path d="M536.6 79.0v17" stroke="#d2d2d2" stroke-width=".7"/><path d="M537.3000000000001 79.0v17" stroke="#fcfcfc" stroke-width=".6"/><g transform="translate(540.72,79.82) scale(0.96)"><path d="M.8 9l1 -4.400q1.400 -3.200 5.200 -3.400l2.400 -.6l5.800 2.400v7.600l-7.400 4.600l-7 -2.400z" fill="#3a70b8" stroke="#1c3c6c" stroke-width=".6" stroke-linejoin="round"/><path d="M.9 9q.2 -2.600 1.400 -5q1.800 -2.800 7.100 -3.400l5.800 2.400q-4.600 .4 -6.200 3.200q-1 1.800 -1.200 5.200z" fill="url(#gRb)" stroke="#8a0c0c" stroke-width=".4"/><path d="M.9 9l6.900 2.400l7.400 -4.600M7.800 11.400v4" fill="none" stroke="#1c3c6c" stroke-width=".5"/><path d="M7.800 11.400q.2 -3.400 1.200 -5.200q1.600 -2.800 6.200 -3.200v7.600l-7.400 4.600z" fill="#2c5ca0" fill-opacity=".6"/></g><g transform="translate(560.32,79.82) scale(0.96)"><path d="M.8 10.200l7.200 -9.400l2.400 -.4l4.800 2.800v7.600l-7.400 4.600l-7 -2.400z" fill="#3a70b8" stroke="#1c3c6c" stroke-width=".6" stroke-linejoin="round"/><path d="M1.200 9.800l6.800 -9l5.800 2.800l-6.200 8.400z" fill="url(#gRb)" stroke="#8a0c0c" stroke-width=".4"/><path d="M.8 10.200l7 2.400l7.400 -4.400M7.800 12.600v2.800" fill="none" stroke="#1c3c6c" stroke-width=".5"/><path d="M8 .8l2.400 -.4l4.800 2.800l-1.400 .4z" fill="#6a9cd8"/></g><g transform="translate(580.02,79.82) scale(0.96)"><path d="M8 .6l6.800 3v8.600l-6.800 3.400l-6.800 -3.400v-8.600z" fill="#3a70b8" stroke="#1c3c6c" stroke-width=".7" stroke-linejoin="round"/><path d="M8 .6l6.800 3l-6.800 3l-6.800 -3z" fill="#6a9cd8" stroke="#1c3c6c" stroke-width=".4"/><path d="M2.600 6.200l4.800 2v6l-4.800 -2.400z" fill="#d41414" stroke="#8a0c0c" stroke-width=".4"/><path d="M8.800 8.200l4.800 -2v5.600l-4.800 2.400z" fill="#d41414" stroke="#8a0c0c" stroke-width=".4"/><path d="M4.200 4.600l3.800 -1.400l3.800 1.400l-3.800 1.600z" fill="#d41414"/><path d="M8 6.600v9" stroke="#8a98b8" stroke-width="1"/></g><g transform="translate(599.82,79.82) scale(0.96)"><path d="M2.600 1.400l6.200 -1l6 2.600v9l-6 3.600l-7.800 -3z" fill="#3a70b8" stroke="#1c3c6c" stroke-width=".7" stroke-linejoin="round"/><path d="M4.600 3.200l4.600 -.6l4 1.800v6.800l-4.200 2.400l-5.600 -2z" fill="#d41414" stroke="#8a0c0c" stroke-width=".4"/><path d="M9.200 2.600v6.800l-5.800 2.200M9.200 9.400l4 1.800" fill="none" stroke="#8a0c0c" stroke-width=".5"/><path d="M3.400 11.600l5.800 -2.200l4 1.800l-4.200 2.400z" fill="#f85050"/></g><path d="M619.7 79.0v17" stroke="#d2d2d2" stroke-width=".7"/><path d="M620.4000000000001 79.0v17" stroke="#fcfcfc" stroke-width=".6"/><g transform="translate(623.32,79.82) scale(0.96)"><circle cx="10.600" cy="5.600" r="4.900" fill="#5a8cd0" stroke="#2a5a9c" stroke-width=".5"/><circle cx="5.800" cy="10.200" r="5" fill="url(#gSph)" stroke="#2a5a9c" stroke-width=".5"/></g></svg><span id="t16" class="t" style="left:275.3px;top:39.50px;font-size:8.6px;color:#333;transform:scaleX(0.8796);">Part Design</span><div style="left:187px;top:98px;width:836px;height:418px;background:linear-gradient(#333365,#9797aa);"></div><svg style="left:187px;top:98px;width:836px;height:418px" viewBox="187 98 836 418"><defs><linearGradient id="bg" gradientUnits="userSpaceOnUse" x1="0" y1="98" x2="0" y2="516"><stop offset="0" stop-color="#333365"/><stop offset="1" stop-color="#9797aa"/></linearGradient><linearGradient id="lf" gradientUnits="userSpaceOnUse" x1="500" y1="336.3" x2="507.5" y2="349.3"><stop offset="0" stop-color="#989898"/><stop offset="0.4" stop-color="#a6a6a6"/><stop offset="1" stop-color="#767676"/></linearGradient><linearGradient id="vf" gradientUnits="userSpaceOnUse" x1="602" y1="235" x2="618" y2="233"><stop offset="0" stop-color="#9c9c9c"/><stop offset="0.4" stop-color="#c8c8c8"/><stop offset="1" stop-color="#aeaeae"/></linearGradient><linearGradient id="ef" gradientUnits="userSpaceOnUse" x1="690" y1="289" x2="687" y2="302"><stop offset="0" stop-color="#a8a8a8"/><stop offset="0.4" stop-color="#bcbcbc"/><stop offset="1" stop-color="#808080"/></linearGradient><radialGradient id="cb" gradientUnits="userSpaceOnUse" cx="612.5" cy="277" r="11"><stop offset="0" stop-color="#cfcfcf"/><stop offset="1" stop-color="#8c8c8c"/></radialGradient></defs><polygon points="409.1,405.7 614.8,286.0 762.1,320.1 563.0,435.9 560.0,437.7 555.5,439.7 551.0,439.2" fill="#5c5c5c" stroke="#2a2a2a" stroke-width="0.6" stroke-linejoin="round"/><polygon points="391.2,320.4 599.3,199.2 606.4,274.5 400.8,394.2" fill="#898989" stroke="#2a2a2a" stroke-width="0.6" stroke-linejoin="round"/><polygon points="390.6,320.8 391.2,320.4 400.8,394.2 400.0,394.4" fill="#555" stroke="#333" stroke-width="0.6"/><path d="M400.8,394.2 L606.4,274.5 L614.8,286 L409.1,405.7 Q405,405.8 403,402.4 Q401.2,398.6 400.8,394.2Z" fill="url(#lf)" stroke="#2a2a2a" stroke-width="0.6" stroke-linejoin="round"/><path d="M599.3,199.2 Q603,196.2 608.4,196.2 Q612,196.4 613.5,197.5 L621,272.6 Q613.5,270.6 606.4,274.5Z" fill="url(#vf)" stroke="#2a2a2a" stroke-width="0.6" stroke-linejoin="round"/><polygon points="613.5,197.5 760.1,232.4 766.4,306.7 621.0,272.6" fill="#9a9a9a" stroke="#2a2a2a" stroke-width="0.6" stroke-linejoin="round"/><polygon points="760.1,232.4 762.7,233.7 768.4,307.4 766.4,306.7" fill="#8e8e8e" stroke="#2a2a2a" stroke-width="0.6" stroke-linejoin="round"/><path d="M621,272.6 L766.4,306.7 L768.4,307.4 Q770.8,309 770.2,312 Q769,317 762.1,320.1 L614.8,286 L621,272.6Z" fill="url(#ef)" stroke="#2a2a2a" stroke-width="0.6" stroke-linejoin="round"/><path d="M606.4,274.5 Q613.5,270.6 621,272.6 Q621.6,281.5 614.8,286 Q607.2,281.5 606.4,274.5Z" fill="url(#cb)" stroke="#2a2a2a" stroke-width="0.6" stroke-linejoin="round"/><polygon points="622.3,217.0 663.4,226.9 668.3,268.7 626.5,258.4" fill="#aaaaaa" stroke="#2a2a2a" stroke-width="0.6" stroke-linejoin="round"/><polygon points="622.3,217.0 663.4,226.9 661.4,229.5 624.0,220.2" fill="#5a5a5a"/><polygon points="624.0,220.2 661.4,229.5 665.8,268.1 626.5,258.4" fill="url(#bg)" stroke="#222" stroke-width="0.5"/><polygon points="622.3,217.0 663.4,226.9 668.3,268.7 626.5,258.4" fill="none" stroke="#2a2a2a" stroke-width="0.6" stroke-linejoin="round"/><polygon points="670.0,221.5 709.3,230.6 714.3,279.0 674.2,269.9" fill="#aaaaaa" stroke="#2a2a2a" stroke-width="0.6" stroke-linejoin="round"/><polygon points="670.0,221.5 709.3,230.6 705.6,232.6 671.7,224.6" fill="#5a5a5a"/><polygon points="671.7,224.6 705.6,232.6 710.6,278.1 674.2,269.9" fill="url(#bg)" stroke="#222" stroke-width="0.5"/><polygon points="694.6,274.3 710.0,266.9 710.6,278.1" fill="#a6a6a6" stroke="#222" stroke-width="0.4"/><polygon points="670.0,221.5 709.3,230.6 714.3,279.0 674.2,269.9" fill="none" stroke="#2a2a2a" stroke-width="0.6" stroke-linejoin="round"/><polygon points="716.0,231.8 754.6,240.6 759.9,289.9 720.4,281.0" fill="#aaaaaa" stroke="#2a2a2a" stroke-width="0.6" stroke-linejoin="round"/><polygon points="716.0,231.8 754.6,240.6 752.1,242.6 717.8,235.0" fill="#5a5a5a"/><polygon points="717.8,235.0 752.1,242.6 757.1,289.0 720.4,281.0" fill="url(#bg)" stroke="#222" stroke-width="0.5"/><polygon points="718.9,260.0 752.2,242.8 757.1,289.0 720.4,281.0" fill="#8f8f8f" stroke="#2a2a2a" stroke-width="0.4"/><polygon points="718.9,260.0 752.2,242.8 752.8,248.3 719.3,265.6" fill="#b0b0b0" stroke="#2a2a2a" stroke-width="0.4"/><polygon points="716.0,231.8 754.6,240.6 759.9,289.9 720.4,281.0" fill="none" stroke="#2a2a2a" stroke-width="0.6" stroke-linejoin="round"/><polygon points="448.3,327.7 478.9,311.1 480.8,331.5 450.2,348.7" fill="#b2b2b2" stroke="#2a2a2a" stroke-width="0.6" stroke-linejoin="round"/><polygon points="448.3,327.7 478.9,311.1 478.9,315.2 453.4,329.2" fill="#5c5c5c"/><polygon points="454.0,336.0 466.8,339.2 454.8,346.0" fill="#c8c8c8" stroke="#333" stroke-width="0.4"/><polygon points="453.4,329.2 478.9,315.2 480.8,331.5 466.8,339.2 454.0,336.0" fill="url(#bg)" stroke="#333" stroke-width="0.4"/><polygon points="448.3,327.7 478.9,311.1 480.8,331.5 450.2,348.7" fill="none" stroke="#2a2a2a" stroke-width="0.6" stroke-linejoin="round"/><polygon points="501.2,299.0 514.5,292.0 516.2,311.1 502.7,318.4" fill="#b4b4b4" stroke="#2a2a2a" stroke-width="0.6" stroke-linejoin="round"/><polygon points="501.2,299.0 514.5,292.0 514.5,295.2 505.6,299.9" fill="#5c5c5c"/><polygon points="505.6,299.9 514.5,295.2 516.2,311.1 506.5,316.2" fill="url(#bg)" stroke="#333" stroke-width="0.4"/><polygon points="501.2,299.0 514.5,292.0 516.2,311.1 502.7,318.4" fill="none" stroke="#2a2a2a" stroke-width="0.6" stroke-linejoin="round"/><g fill="#e9e9f0" fill-opacity="0.92"><polygon points="979.3,102.6 974.8,107.2 983.8,107.2"/><polygon points="979.3,182.3 974.8,177.7 983.8,177.7"/><polygon points="939.4,142.2 944.1,138 944.1,146.5"/><polygon points="1019.8,142.2 1015,138 1015,146.5"/><path d="M968.6,105.9 L969.6,109.3 Q961,111.6 956.2,117.300 L958.2,118.9 L950,120.2 L950.9,112.700 L953,114.600 Q958.8,108.100 968.6,105.900Z"/><path d="M990,105.9 L989,109.3 Q997.600,111.6 1002.400,117.300 L1000.400,118.9 L1008.600,120.2 L1007.700,112.700 L1005.600,114.600 Q999.800,108.100 990,105.900Z"/></g><clipPath id="cubeclip"><path d="M978,118 Q983,117.600 988.9,120.4 L999.3,127.7 Q1001,130 1001.400,134 L1004.300,153 Q1004.300,155.400 1001.500,156.200 L984.500,161.900 Q982.500,162.500 978,162 L965,159.800 Q962.500,159 960.800,156.500 L958,152 Q957.200,150.500 957.500,147 L959,133.500 Q959.300,131.300 961.500,129.800 L974,120 Q976,118.200 978,118Z"/></clipPath><path d="M978,118 Q983,117.600 988.9,120.4 L999.3,127.7 Q1001,130 1001.400,134 L1004.300,153 Q1004.300,155.400 1001.500,156.200 L984.500,161.900 Q982.500,162.500 978,162 L965,159.800 Q962.500,159 960.800,156.500 L958,152 Q957.200,150.500 957.500,147 L959,133.500 Q959.300,131.300 961.500,129.800 L974,120 Q976,118.200 978,118Z" fill="#f1f2f7"/><path d="M977.600,118.500 L980.300,150.900 L983.600,161.500" fill="none" stroke="#d3d7e6" stroke-width="4.600" clip-path="url(#cubeclip)"/><path d="M958.500,150.500 Q970,153.500 980.900,152 L1003.500,154.600" fill="none" stroke="#dde0ec" stroke-width="4" clip-path="url(#cubeclip)"/><path d="M961,130.500 L977,118.600 L998.800,127.600" fill="none" stroke="#dde0ea" stroke-width="1.6"/><circle cx="979.300" cy="151.800" r="3.400" fill="#f4f5f9"/><text x="0" y="0" transform="translate(961.400,142.800) rotate(-27) scale(.85,1)" font-family="Liberation Sans, sans-serif" font-size="6.4" font-style="italic" fill="#111" opacity=".99">Rear</text><text x="0" y="0" transform="translate(984.6,137) rotate(12) scale(.85,1)" font-family="Liberation Sans, sans-serif" font-size="8" fill="#111" opacity=".99">Left</text><text x="0" y="0" transform="translate(994,154.500) rotate(166) scale(.8,.5)" font-family="Liberation Sans, sans-serif" font-size="6.500" fill="#111" opacity=".99">Bottom</text><path d="M963.500,132.500l7,2.800M985,134l9,-5" stroke="#b8bcd0" stroke-width=".5"/><path d="M973.500,136l2.500,1.200" stroke="#33339a" stroke-width=".9"/><path d="M979.600,141v3.500" stroke="#33339a" stroke-width=".9"/><path d="M1005.2,154.4L1000.1,126.5" stroke="#1818c0" stroke-width="1"/><path d="M1005.2,154.4L978,150.6" stroke="#18d818" stroke-width="1"/><path d="M980.500,149.400l-3,1.100l2.800,1.500z" fill="#18d818"/><path d="M1005.2,154.4L984.1,162.1" stroke="#c01818" stroke-width="1"/><text x="1001.800" y="124.800" font-family="Liberation Sans, sans-serif" font-size="5.500" font-weight="bold" fill="#1818d0">Z</text><text x="983.500" y="165.300" font-family="Liberation Sans, sans-serif" font-size="4.500" fill="#d01818" transform="rotate(-15 984 164)">X</text><path d="M993,170.400l6,-2.600l6.200,2.200v5.800l-6,2.400l-6.200,-2.400z" fill="#d8d8d8"/><path d="M993,170.400l6.200,2.200l6,-2.600l-6.200,-2.200z" fill="#efefef"/><path d="M999.200,172.600l6,-2.600v5.800l-6,2.400z" fill="#bebebe"/><path d="M1008,171.300h6.600l-3.300,3.400z" fill="#2c2c34"/><path d="M1002.3,494.4L1001.700,484" stroke="#1c1cc8" stroke-width="1.300"/><path d="M1000.500,485.200l1.200,-3l1.200,3z" fill="#1c1cc8"/><path d="M1002.3,494.4L990.500,491.900" stroke="#1ca01c" stroke-width="1.500"/><path d="M991.500,490.500l-2.600,1l2.200,1.600z" fill="#1ca01c"/><path d="M1002.3,494.4L996,498.400" stroke="#b01c1c" stroke-width="1.300"/><path d="M996.200,497.200l-1.400,2l2.400,-.3z" fill="#b01c1c"/><text x="1002.600" y="483.300" font-family="Liberation Sans, sans-serif" font-size="4.600" fill="#111" transform="rotate(-8 1004 481)">Z</text><text x="990.200" y="491" font-family="Liberation Sans, sans-serif" font-size="4.200" fill="#111">Y</text><text x="996.500" y="500.200" font-family="Liberation Sans, sans-serif" font-size="4.200" fill="#111">X</text></svg><div style="left:0px;top:161px;width:1.4px;height:45.5px;background:#ffc6c6;"></div><div style="left:0px;top:206.5px;width:1.4px;height:47px;background:#ffd2a0;"></div><div style="left:0px;top:253.5px;width:1.4px;height:45.5px;background:#f2ff9c;"></div><div style="left:1.3px;top:161px;width:0.8px;height:138px;background:#8a8a8a;"></div><div style="left:2px;top:98.6px;width:182px;height:11.3px;background:#dcdcdc;"></div><span id="t17" class="t" style="left:3px;top:99.80px;font-size:7.5px;color:#000;transform:scaleX(0.7778);">コンボビュー</span><svg style="left:166px;top:100px;width:18px;height:9px" viewBox="166 100 18 9"><rect x="168.3" y="103.6" width="3.2" height="3.2" fill="#f4f4f4" stroke="#111" stroke-width="0.9"/><path d="M169.6 102.2h3.3v3.2" fill="none" stroke="#111" stroke-width="1.1"/><path d="M177.3 102.6l3.7 3.8M181 102.6l-3.7 3.8" stroke="#111" stroke-width="1.1"/></svg><div style="left:2px;top:112px;width:34px;height:12.5px;background:#fff;"></div><div style="left:36px;top:112.4px;width:30.8px;height:12px;background:#f3f3f3;border:0.6px solid #dadada;border-bottom:none;box-sizing:border-box;"></div><span id="t18" class="t" style="left:8.2px;top:112.80px;font-size:7.5px;color:#000;transform:scaleX(0.8356);">モデル</span><span id="t19" class="t" style="left:42.6px;top:113.10px;font-size:7.5px;color:#000;transform:scaleX(0.7644);">タスク</span><div style="left:2.2px;top:124.4px;width:179.8px;height:188.8px;background:#fff;border:0.8px solid #b4b4c6;box-sizing:border-box;"></div><span id="t20" class="t" style="left:5px;top:128.10px;font-size:7.5px;color:#000;transform:scaleX(0.8778);">ラベルと属性</span><div style="left:171.3px;top:125.2px;width:10px;height:187.2px;background:#f0f0f0;"></div><div style="left:171.3px;top:179.8px;width:10px;height:98.2px;background:#cdcdcd;"></div><svg style="left:171px;top:126px;width:10px;height:186px" viewBox="171 126 10 186"><path d="M173.2 131.8l2.4 -2.5l2.4 2.5" fill="none" stroke="#484848" stroke-width="1.15"/><path d="M173.2 305.6l2.4 2.5l2.4 -2.5" fill="none" stroke="#484848" stroke-width="1.15"/></svg><div style="left:3px;top:125px;width:168px;height:187.4px;overflow:hidden"><span id="t21" class="t" style="left:68.1px;top:16.10px;font-size:8.6px;color:#7a7a7a;transform:scaleX(0.8720);">PLC HAT Outline</span><span id="t22" class="t" style="left:68.1px;top:27.82px;font-size:8.6px;color:#7a7a7a;transform:scaleX(0.8720);">Pad</span><span id="t23" class="t" style="left:81.5px;top:39.54px;font-size:8.6px;color:#7a7a7a;transform:scaleX(0.8720);">Project BOX Outer</span><span id="t24" class="t" style="left:68.1px;top:51.26px;font-size:8.6px;color:#7a7a7a;transform:scaleX(0.8720);">Pocket</span><span id="t25" class="t" style="left:81.5px;top:62.98px;font-size:8.6px;color:#7a7a7a;transform:scaleX(0.8720);">Sketch002</span><span id="t26" class="t" style="left:68.1px;top:74.70px;font-size:8.6px;color:#7a7a7a;transform:scaleX(0.8720);">Pocket001</span><span id="t27" class="t" style="left:81.5px;top:86.42px;font-size:8.6px;color:#7a7a7a;transform:scaleX(0.8720);">Sketch003</span><span id="t28" class="t" style="left:68.1px;top:98.14px;font-size:8.6px;color:#7a7a7a;transform:scaleX(0.8720);">Pocket002</span><span id="t29" class="t" style="left:81.5px;top:109.86px;font-size:8.6px;color:#7a7a7a;transform:scaleX(0.8720);">Sketch005</span><span id="t30" class="t" style="left:68.1px;top:121.58px;font-size:8.6px;color:#7a7a7a;transform:scaleX(0.8720);">Pocket003</span><span id="t31" class="t" style="left:81.5px;top:133.30px;font-size:8.6px;color:#7a7a7a;transform:scaleX(0.8720);">Sketch006</span><span id="t32" class="t" style="left:68.1px;top:145.02px;font-size:8.6px;color:#7a7a7a;transform:scaleX(0.8720);">Pad001</span><span id="t33" class="t" style="left:68.1px;top:156.74px;font-size:8.6px;color:#7a7a7a;transform:scaleX(0.8720);">Fillet</span><span id="t34" class="t" style="left:68.1px;top:168.46px;font-size:8.6px;color:#7a7a7a;transform:scaleX(0.8720);">Fillet001</span><span id="t35" class="t" style="left:68.1px;top:180.18px;font-size:8.6px;color:#7a7a7a;transform:scaleX(0.8720);">Fillet002</span></div><svg style="left:3px;top:125px;width:168px;height:187.5px" viewBox="3 125 168 187.5"><g transform="translate(57.4,141.8)"><rect x="0.4" y="3.6" width="5.8" height="5.8" fill="#fff" stroke="#727272" stroke-width="1.05"/><circle cx="6.3" cy="3.6" r="3.1" fill="#fff" fill-opacity="0.6" stroke="#727272" stroke-width="1.05"/></g><g transform="translate(57.4,153.52)"><path d="M0.6 7.4l4.3 -1.6l4.6 1.4l-4.4 1.9z" fill="#e8e8e8" stroke="#666" stroke-width="0.6"/><path d="M0.8 2.6l4.2 -1.8l4.4 1.4v3.2l-4.5 2l-4.1 -1.5z" fill="#8a8a8a" stroke="#555" stroke-width="0.6"/><path d="M0.8 2.6l4.1 1.5l4.5 -1.9" fill="none" stroke="#555" stroke-width="0.5"/><path d="M1 2.6l4.2 -1.7l4 1.3l-4.3 1.8z" fill="#b0b0b0"/></g><path d="M45.6 157.12l2.6 2.7l2.6 -2.7" fill="none" stroke="#383838" stroke-width="1.25"/><g transform="translate(70.7,165.24)"><rect x="0.4" y="3.6" width="5.8" height="5.8" fill="#fff" stroke="#727272" stroke-width="1.05"/><circle cx="6.3" cy="3.6" r="3.1" fill="#fff" fill-opacity="0.6" stroke="#727272" stroke-width="1.05"/></g><g transform="translate(57.4,176.96)"><path d="M0.5 5l5 -3.6l4.3 1.2v3.2l-5.2 3.6l-4.1 -1.4z" fill="#7c7c7c" stroke="#555" stroke-width="0.5"/><path d="M0.6 5l5 -3.5l4.1 1.2l-5.1 3.6z" fill="#9c9c9c"/><path d="M3 4.7l2.8 -2l2 .6l-2.8 2z" fill="#666"/></g><path d="M45.6 180.56l2.6 2.7l2.6 -2.7" fill="none" stroke="#383838" stroke-width="1.25"/><g transform="translate(70.7,188.68)"><rect x="0.4" y="3.6" width="5.8" height="5.8" fill="#fff" stroke="#727272" stroke-width="1.05"/><circle cx="6.3" cy="3.6" r="3.1" fill="#fff" fill-opacity="0.6" stroke="#727272" stroke-width="1.05"/></g><g transform="translate(57.4,200.4)"><path d="M0.5 5l5 -3.6l4.3 1.2v3.2l-5.2 3.6l-4.1 -1.4z" fill="#7c7c7c" stroke="#555" stroke-width="0.5"/><path d="M0.6 5l5 -3.5l4.1 1.2l-5.1 3.6z" fill="#9c9c9c"/><path d="M3 4.7l2.8 -2l2 .6l-2.8 2z" fill="#666"/></g><path d="M45.6 204.0l2.6 2.7l2.6 -2.7" fill="none" stroke="#383838" stroke-width="1.25"/><g transform="translate(70.7,212.12)"><rect x="0.4" y="3.6" width="5.8" height="5.8" fill="#fff" stroke="#727272" stroke-width="1.05"/><circle cx="6.3" cy="3.6" r="3.1" fill="#fff" fill-opacity="0.6" stroke="#727272" stroke-width="1.05"/></g><g transform="translate(57.4,223.84000000000003)"><path d="M0.5 5l5 -3.6l4.3 1.2v3.2l-5.2 3.6l-4.1 -1.4z" fill="#7c7c7c" stroke="#555" stroke-width="0.5"/><path d="M0.6 5l5 -3.5l4.1 1.2l-5.1 3.6z" fill="#9c9c9c"/><path d="M3 4.7l2.8 -2l2 .6l-2.8 2z" fill="#666"/></g><path d="M45.6 227.44000000000003l2.6 2.7l2.6 -2.7" fill="none" stroke="#383838" stroke-width="1.25"/><g transform="translate(70.7,235.56)"><rect x="0.4" y="3.6" width="5.8" height="5.8" fill="#fff" stroke="#727272" stroke-width="1.05"/><circle cx="6.3" cy="3.6" r="3.1" fill="#fff" fill-opacity="0.6" stroke="#727272" stroke-width="1.05"/></g><g transform="translate(57.4,247.28000000000003)"><path d="M0.5 5l5 -3.6l4.3 1.2v3.2l-5.2 3.6l-4.1 -1.4z" fill="#7c7c7c" stroke="#555" stroke-width="0.5"/><path d="M0.6 5l5 -3.5l4.1 1.2l-5.1 3.6z" fill="#9c9c9c"/><path d="M3 4.7l2.8 -2l2 .6l-2.8 2z" fill="#666"/></g><path d="M45.6 250.88000000000002l2.6 2.7l2.6 -2.7" fill="none" stroke="#383838" stroke-width="1.25"/><g transform="translate(70.7,259.0)"><rect x="0.4" y="3.6" width="5.8" height="5.8" fill="#fff" stroke="#727272" stroke-width="1.05"/><circle cx="6.3" cy="3.6" r="3.1" fill="#fff" fill-opacity="0.6" stroke="#727272" stroke-width="1.05"/></g><g transform="translate(57.4,270.72)"><path d="M0.6 7.4l4.3 -1.6l4.6 1.4l-4.4 1.9z" fill="#e8e8e8" stroke="#666" stroke-width="0.6"/><path d="M0.8 2.6l4.2 -1.8l4.4 1.4v3.2l-4.5 2l-4.1 -1.5z" fill="#8a8a8a" stroke="#555" stroke-width="0.6"/><path d="M0.8 2.6l4.1 1.5l4.5 -1.9" fill="none" stroke="#555" stroke-width="0.5"/><path d="M1 2.6l4.2 -1.7l4 1.3l-4.3 1.8z" fill="#b0b0b0"/></g><path d="M47.4 273.22l2.5 2.5l-2.5 2.5" fill="none" stroke="#9a9a9a" stroke-width="0.8"/><g transform="translate(57.4,282.44000000000005)"><path d="M0.5 4.4q0 -1.6 1.6 -2.2l3.4 -1.4l4.3 1.3v4.3l-5.2 2.8l-4.1 -1.5z" fill="#7c7c7c" stroke="#555" stroke-width="0.5"/><path d="M0.8 3.6q.4 -1 1.6 -1.4l3.2 -1.3l4 1.2l-5 2.7z" fill="#9a9a9a"/></g><g transform="translate(57.4,294.16)"><path d="M0.5 4.4q0 -1.6 1.6 -2.2l3.4 -1.4l4.3 1.3v4.3l-5.2 2.8l-4.1 -1.5z" fill="#7c7c7c" stroke="#555" stroke-width="0.5"/><path d="M0.8 3.6q.4 -1 1.6 -1.4l3.2 -1.3l4 1.2l-5 2.7z" fill="#9a9a9a"/></g><g transform="translate(57.4,305.88)"><path d="M0.5 4.4q0 -1.6 1.6 -2.2l3.4 -1.4l4.3 1.3v4.3l-5.2 2.8l-4.1 -1.5z" fill="#7c7c7c" stroke="#555" stroke-width="0.5"/><path d="M0.8 3.6q.4 -1 1.6 -1.4l3.2 -1.3l4 1.2l-5 2.7z" fill="#9a9a9a"/></g></svg><div style="left:2.2px;top:317.7px;width:178.2px;height:200.2px;background:#fff;border:0.8px solid #b4b4c6;box-sizing:border-box;"></div><span id="t36" class="t" style="left:6.2px;top:321.50px;font-size:7.5px;color:#000;transform:scaleX(0.7609);">プロパティ</span><span id="t37" class="t" style="left:72.7px;top:321.50px;font-size:7.5px;color:#000;transform:scaleX(0.8000);">値</span><div style="left:69.4px;top:318.5px;width:0.6px;height:16px;background:#e4e4e4;"></div><div style="left:2px;top:517.9px;width:180px;height:10.6px;background:#fff;"></div><svg style="left:2px;top:517px;width:70px;height:12px" viewBox="2 516.2 70 12"><path d="M2.3 517.8q2.2 0 3.2 4.2q1 4.6 3.4 4.6h18.6q2.4 0 3.4 -4.6q.6 -2.8 1.3 -4.2" fill="#fff" stroke="#555" stroke-width="0.7"/><path d="M33 517.9q1.4 0 2.5 4.6q1 4.9 3.4 4.9h23.2q2.4 0 3.6 -4.9q.8 -3.2 1.8 -4.6" fill="#fff" stroke="#555" stroke-width="0.7"/></svg><span id="t38" class="t" style="left:10.3px;top:518.60px;font-size:7.5px;color:#000;transform:scaleX(1.0067);">表示</span><span id="t39" class="t" style="left:41.5px;top:518.60px;font-size:7.5px;color:#000;transform:scaleX(0.7778);">データ</span><div style="left:188px;top:516.3px;width:81.7px;height:12.2px;background:#f0f0f0;border:0.6px solid #e2e2e2;border-top:none;box-sizing:border-box;"></div><div style="left:270.3px;top:515.4px;width:105.1px;height:14.3px;background:#fff;"></div><svg style="left:195px;top:517.1px;width:10.6px;height:10.0px" viewBox="0 0 10.6 10"><path d="M0.3 0.100h5.700v2.500h-3.100v1.700h2v2.100h-2v3.500h-2.600z" fill="#cf1818"/><path d="M0.300 0.100h.7v9.800h-.7z" fill="#a81212"/><circle cx="6.800" cy="6.400" r="2.500" fill="#3c64a8"/><circle cx="6.800" cy="6.400" r="3.100" fill="none" stroke="#3c64a8" stroke-width="1.300" stroke-dasharray="1.200 1.230"/><circle cx="6.800" cy="6.400" r="1" fill="#fff"/></svg><svg style="left:279px;top:518.1px;width:10.6px;height:10.0px" viewBox="0 0 10.6 10"><path d="M0.3 0.100h5.700v2.500h-3.100v1.700h2v2.100h-2v3.500h-2.600z" fill="#cf1818"/><path d="M0.300 0.100h.7v9.800h-.7z" fill="#a81212"/><circle cx="6.800" cy="6.400" r="2.500" fill="#3c64a8"/><circle cx="6.800" cy="6.400" r="3.100" fill="none" stroke="#3c64a8" stroke-width="1.300" stroke-dasharray="1.200 1.230"/><circle cx="6.800" cy="6.400" r="1" fill="#fff"/></svg><span id="t40" class="t" style="left:207.4px;top:517.50px;font-size:7.5px;color:#222;transform:scaleX(0.8002);">スタートページ</span><span id="t41" class="t" style="left:292px;top:518.10px;font-size:8.2px;color:#111;transform:scaleX(0.8186);">PLC_HAT_R01</span><span id="t42" class="t" style="left:342.4px;top:518.10px;font-size:8.2px;color:#111;transform:scaleX(1.0003);">: 1*</span><svg style="left:253px;top:518px;width:8px;height:8px" viewBox="0 0 8 8"><rect x=".6" y=".7" width="7" height="7" rx=".6" fill="#c2c2c2"/><path d="M2.6 2.7l3 3M5.6 2.7l-3 3" stroke="#fff" stroke-width="1"/></svg><svg style="left:358px;top:519px;width:8px;height:8px" viewBox="0 0 8 8"><rect x=".2" y=".1" width="7.6" height="7.7" rx=".8" fill="#e2704e"/><path d="M2.4 2.4l3.2 3.2M5.6 2.4l-3.2 3.2" stroke="#fff" stroke-width="1.1"/></svg><span id="t43" class="t" style="left:3.7px;top:534.00px;font-size:8.6px;color:#111;transform:scaleX(0.8712);">Preselected: Fillet003 - PLC_HAT_R01.Fillet003.Face15 (-53.6, -9.28252, 27.4983)</span><svg style="left:879px;top:534px;width:7px;height:11px" viewBox="0 0 7 11"><rect x="1" y="1" width="4.6" height="8.6" rx="2.2" fill="#f8f8f8" stroke="#222" stroke-width="0.8"/><path d="M3.3 1.2v3" stroke="#222" stroke-width="0.9"/></svg><span id="t44" class="t" style="left:889.7px;top:534.10px;font-size:8.6px;color:#111;transform:scaleX(0.8817);">Blende</span><svg style="left:915px;top:537px;width:6px;height:5px" viewBox="0 0 6 5"><path d="M0.6 1.2h4.6l-2.3 2.6z" fill="#111"/></svg><div style="left:923.5px;top:532px;width:0.6px;height:15px;background:#dadada;"></div><span id="t45" class="t" style="left:926.5px;top:534.10px;font-size:8.6px;color:#111;transform:scaleX(0.9026);">255.69 mm x 127.60 mm</span><div style="left:1013.2px;top:532px;width:0.6px;height:15px;background:#dadada;"></div><svg style="left:1014px;top:539px;width:9px;height:9px" viewBox="0 0 9 9"><g fill="#b8b8b8"><rect x="6" y="1" width="1.2" height="1.2"/><rect x="4" y="3.5" width="1.2" height="1.2"/><rect x="6" y="3.5" width="1.2" height="1.2"/><rect x="2" y="6" width="1.2" height="1.2"/><rect x="4" y="6" width="1.2" height="1.2"/><rect x="6" y="6" width="1.2" height="1.2"/></g></svg>
</body></html>
